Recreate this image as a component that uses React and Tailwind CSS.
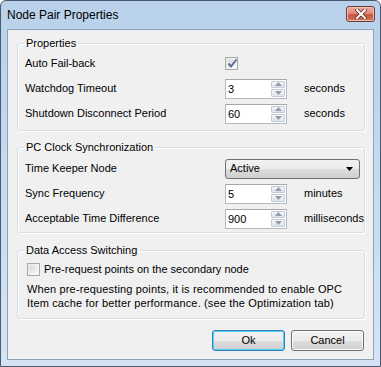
import React from "react";

const font = { fontFamily: '"Liberation Sans", Arial, sans-serif' };

function Spin({ value }) {
  return (
    <div className="flex w-[62px] h-[20px] bg-white border border-[#b4b8bf] border-t-[#a3a7ae]">
      <span className="flex-1 pl-[2px] text-[11px] leading-[18px] text-black">{value}</span>
      <div className="w-[16px] flex flex-col p-[1px] gap-[1px]">
        {[0, 1].map((i) => (
          <div
            key={i}
            className="flex-1 flex items-center justify-center rounded-[1px] border border-[#c5ccd6] bg-gradient-to-b from-[#f4f7fa] to-[#dde4ec]"
          >
            <svg width="7" height="4" viewBox="0 0 7 4">
              {i === 0 ? (
                <polygon points="0,4 3.5,0 7,4" fill="#8d9cb0" />
              ) : (
                <polygon points="0,0 3.5,4 7,0" fill="#8d9cb0" />
              )}
            </svg>
          </div>
        ))}
      </div>
    </div>
  );
}

function Check({ checked }) {
  return (
    <div className="w-[13px] h-[13px] shrink-0 border border-[#a5a8ac] bg-gradient-to-br from-[#e6e6e6] to-[#fbfbfb] p-[2px]">
      <div className="w-full h-full bg-gradient-to-br from-[#d8dadc] to-[#f2f3f3] relative">
        {checked && (
          <svg className="absolute -top-[2px] -left-[1px]" width="11" height="11" viewBox="0 0 11 11">
            <path d="M1.5 5.5 L4 8.5 L9.5 1.5" fill="none" stroke="#5c6f9c" strokeWidth="2" />
          </svg>
        )}
      </div>
    </div>
  );
}

function Row({ label, children, unit }) {
  return (
    <div className="flex items-center h-[25px]">
      <span className="w-[207px] shrink-0 pl-[7px] text-[11px]">{label}</span>
      <div className="w-[79px] shrink-0 flex items-center">{children}</div>
      {unit && <span className="text-[11px]">{unit}</span>}
    </div>
  );
}

function Group({ title, children, className = "" }) {
  return (
    <fieldset className={`border border-[#d5dfe5] rounded-[3px] shadow-[inset_1px_1px_0_#ffffff,1px_1px_0_#ffffff] ${className}`}>
      <legend className="ml-[6px] px-[2px] text-[11px] leading-[14px]">{title}</legend>
      {children}
    </fieldset>
  );
}

function Button({ children, isDefault }) {
  return (
    <div
      className={`w-[73px] h-[21px] rounded-[3px] border ${
        isDefault ? "border-[#3c7fb1] shadow-[inset_0_0_0_1px_#48d2fa]" : "border-[#707070] shadow-[inset_0_0_0_1px_#fbfbfb]"
      } bg-[linear-gradient(to_bottom,#f2f2f2_0%,#ebebeb_50%,#dddddd_50%,#cfcfcf_100%)] flex items-center justify-center text-[11px]`}
    >
      {children}
    </div>
  );
}

export default function App() {
  return (
    <div
      style={font}
      className="w-[381px] h-[367px] flex flex-col rounded-t-[6px] border border-[#4a5a6e] bg-gradient-to-b from-[#b9d1ea] via-[#c7dbf0] to-[#d4e4f5] text-black overflow-hidden"
    >
      <div className="h-[28px] flex items-center justify-between pl-[6px] pr-[5px] shrink-0">
        <span className="text-[12px] text-black">Node Pair Properties</span>
        <div className="w-[29px] h-[16px] mt-[-2px] rounded-[3px] border border-[#6d3a35] bg-[linear-gradient(to_bottom,#e9a99c_0%,#dd8c7d_45%,#c6533f_55%,#d17a5e_100%)] flex items-center justify-center shadow-[inset_0_0_0_1px_#f1c0b4]">
          <svg width="12" height="10" viewBox="0 0 12 10">
            <path d="M2 1 L10 9 M10 1 L2 9" stroke="#5a2a22" strokeWidth="3.6" strokeLinecap="square" />
            <path d="M2 1 L10 9 M10 1 L2 9" stroke="#ffffff" strokeWidth="2" strokeLinecap="square" />
          </svg>
        </div>
      </div>
      <div className="flex-1 mx-[6px] mb-[6px] border border-[#8da2bb] bg-[#f0f0f0] pl-[9px] pr-[8px] pt-[6px] flex flex-col">
        <Group title="Properties" className="pb-[4px]">
          <div className="pt-[1px]">
            <Row label="Auto Fail-back">
              <Check checked />
            </Row>
            <Row label="Watchdog Timeout" unit="seconds">
              <Spin value="3" />
            </Row>
            <Row label="Shutdown Disconnect Period" unit="seconds">
              <Spin value="60" />
            </Row>
          </div>
        </Group>
        <Group title="PC Clock Synchronization" className="mt-[9px] pb-[1px]">
          <div className="pt-[2px]">
            <Row label="Time Keeper Node">
              <div className="w-[135px] h-[20px] shrink-0 rounded-[3px] border border-[#707070] bg-[linear-gradient(to_bottom,#f2f2f2_0%,#ebebeb_50%,#dddddd_50%,#cfcfcf_100%)] flex items-center justify-between pl-[4px] pr-[6px] text-[11px]">
                <span>Active</span>
                <svg width="7" height="4" viewBox="0 0 7 4">
                  <polygon points="0,0 7,0 3.5,4" fill="#000" />
                </svg>
              </div>
            </Row>
            <Row label="Sync Frequency" unit="minutes">
              <Spin value="5" />
            </Row>
            <Row label="Acceptable Time Difference" unit="milliseconds">
              <Spin value="900" />
            </Row>
          </div>
        </Group>
        <Group title="Data Access Switching" className="mt-[10px] pb-[8px]">
          <div className="pl-[9px] pr-[4px]">
            <div className="flex items-center gap-[4px] h-[22px] pt-[2px]">
              <Check />
              <span className="text-[11px]">Pre-request points on the secondary node</span>
            </div>
            <p className="text-[11px] leading-[14px] mt-[3px] tracking-[0.15px]">
              When pre-requesting points, it is recommended to enable OPC
              <br />
              Item cache for better performance. (see the Optimization tab)
            </p>
          </div>
        </Group>
        <div className="flex justify-end gap-[6px] mt-[11px] pr-[1px]">
          <Button isDefault>Ok</Button>
          <Button>Cancel</Button>
        </div>
      </div>
    </div>
  );
}
